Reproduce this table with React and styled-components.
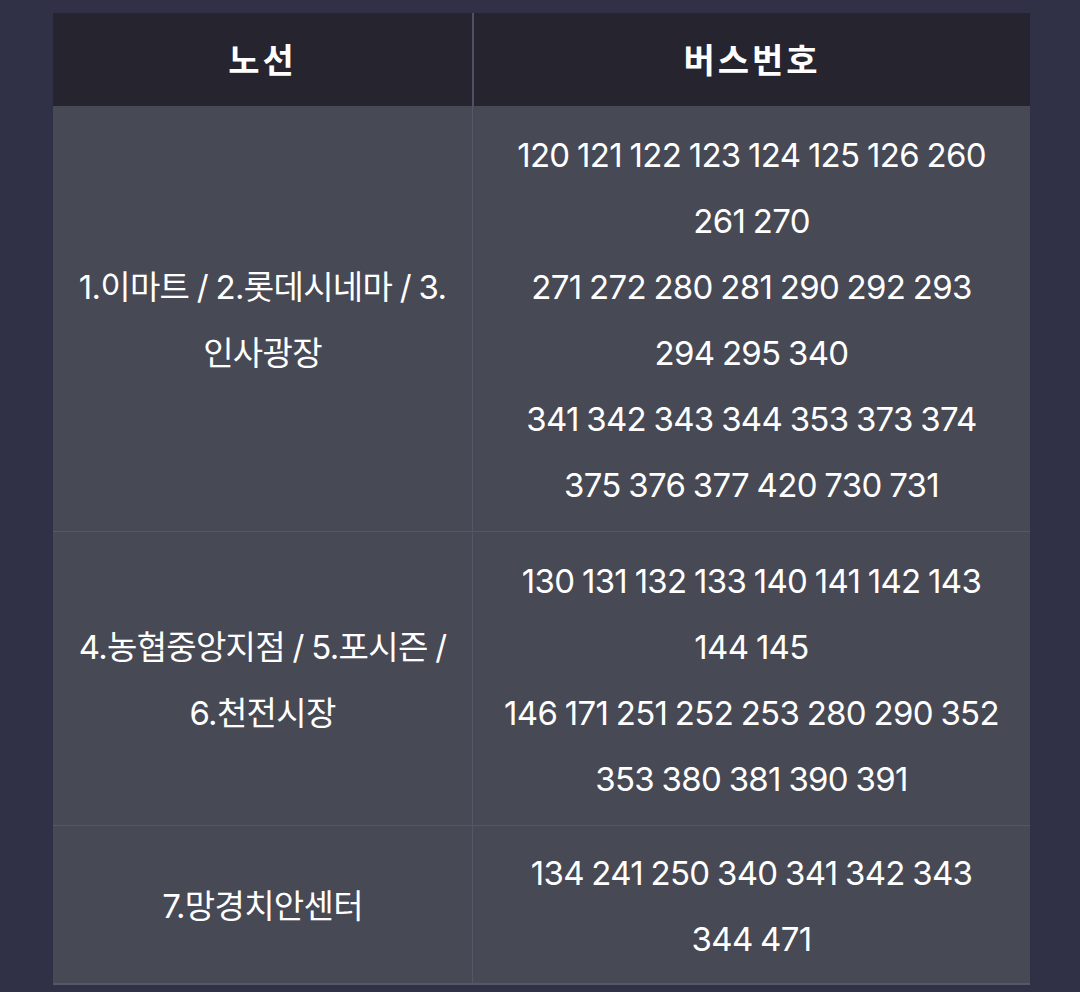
import React from 'react';
import styled, { createGlobalStyle } from 'styled-components';

const GlobalStyle = createGlobalStyle`
  html, body {
    margin: 0;
    padding: 0;
    background: #303047;
  }
  body {
    font-family: Inter, "Noto Sans CJK KR", "Noto Sans", sans-serif;
    color: #ffffff;
  }
`;

const Page = styled.div`
  padding: 13px 50px 6px 53px;
  min-height: 992px;
  box-sizing: border-box;
`;

const Table = styled.div`
  display: grid;
  grid-template-columns: 419px 1fr;
  width: 977px;
  background: #474955;
  border-bottom: 2px solid #55576a;
`;

const HeadCell = styled.div`
  background: #25242f;
  height: 93px;
  display: flex;
  align-items: center;
  justify-content: center;
  font-family: "Noto Sans CJK KR", sans-serif;
  font-size: 34px;
  font-weight: 700;
  letter-spacing: 3px;
  border-left: ${(p) => (p.$divider ? '2px solid #4f5064' : 'none')};
  padding-bottom: 2px;
  box-sizing: border-box;
`;

const Cell = styled.div`
  display: flex;
  align-items: center;
  justify-content: center;
  text-align: center;
  padding: ${(p) => (p.$last ? '14px 8px 11px' : '16px 8px 13px')};
  font-size: 33px;
  line-height: 66px;
  letter-spacing: -0.7px;
  word-spacing: -1px;
  border-top: ${(p) => (p.$first ? 'none' : '1px solid #555768')};
  border-left: ${(p) => (p.$divider ? '1px solid #555768' : 'none')};
`;

const rows = [
  {
    route: ['1.이마트 / 2.롯데시네마 / 3.', '인사광장'],
    buses: [
      '120 121 122 123 124 125 126 260',
      '261 270',
      '271 272 280 281 290 292 293',
      '294 295 340',
      '341 342 343 344 353 373 374',
      '375 376 377 420 730 731',
    ],
  },
  {
    route: ['4.농협중앙지점 / 5.포시즌 /', '6.천전시장'],
    buses: [
      '130 131 132 133 140 141 142 143',
      '144 145',
      '146 171 251 252 253 280 290 352',
      '353 380 381 390 391',
    ],
  },
  {
    route: ['7.망경치안센터'],
    buses: ['134 241 250 340 341 342 343', '344 471'],
  },
];

const Lines = ({ items }) =>
  items.map((t, i) => (
    <React.Fragment key={i}>
      {i > 0 && <br />}
      {t}
    </React.Fragment>
  ));

export default function App() {
  return (
    <Page>
      <GlobalStyle />
      <Table>
        <HeadCell>노선</HeadCell>
        <HeadCell $divider>버스번호</HeadCell>
        {rows.map((r, i) => {
          const last = i === rows.length - 1;
          return (
            <React.Fragment key={i}>
              <Cell $first={i === 0} $last={last}>
                <div><Lines items={r.route} /></div>
              </Cell>
              <Cell $first={i === 0} $last={last} $divider>
                <div><Lines items={r.buses} /></div>
              </Cell>
            </React.Fragment>
          );
        })}
      </Table>
    </Page>
  );
}
